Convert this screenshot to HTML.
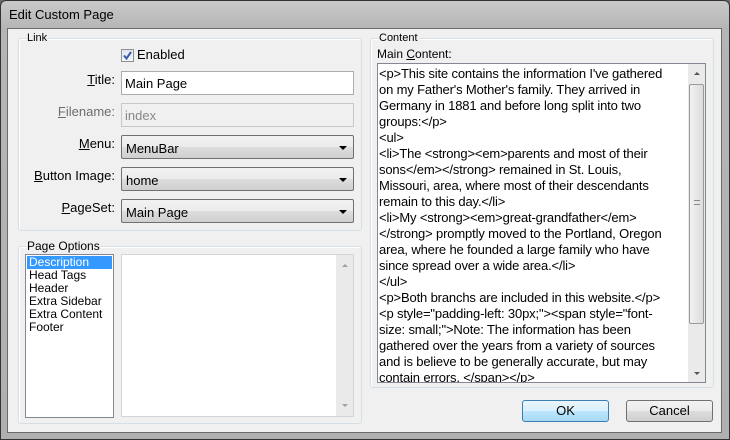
<!DOCTYPE html>
<html><head><style>
*{box-sizing:border-box;margin:0;padding:0}
body{width:730px;height:440px;background:#6b6b6b;font-family:"Liberation Sans",sans-serif;font-size:13px;color:#000;position:relative;overflow:hidden}
.win{position:absolute;left:0;top:0;width:730px;height:440px;border:1px solid #333;border-radius:6px 6px 0 0;background:linear-gradient(#c9c9c9,#b5b5b5 28px,#b0b0b0)}
.title{position:absolute;left:8px;top:6px;font-size:13px;color:#000;font-family:"Liberation Sans",sans-serif}
.client{position:absolute;left:7px;top:28px;width:715px;height:405px;background:#f0f0f0;border:1px solid #6c6c6c}
.abs{position:absolute}
.grp{position:absolute;border:1px solid #d5dfe5;border-radius:3px;box-shadow:inset 1px 1px 0 #fff}
.glab{position:absolute;background:#f0f0f0;font-size:11px;padding:0 1px;top:-7px;left:7px}
.lbl{position:absolute;right:0;text-align:right;font-size:13px}
.inp{position:absolute;border:1px solid #abadb3;background:#fff;padding:4px 3px;font-size:13px;height:24px}
.sel{position:absolute;border:1px solid #707070;border-radius:2px;background:linear-gradient(#f2f2f2 0,#ebebeb 50%,#dddddd 51%,#cfcfcf);padding:5px 4px;font-size:13px;height:24px}
.sel:after{content:"";position:absolute;right:6px;top:10px;border-left:4px solid transparent;border-right:4px solid transparent;border-top:4px solid #000}
.btn{position:absolute;border:1px solid #707070;border-radius:3px;background:linear-gradient(#f2f2f2,#ebebeb 50%,#dddddd 51%,#cfcfcf);text-align:center;font-size:13px;line-height:20px}
</style></head><body>
<div class="win"><div class="title">Edit Custom Page</div></div>
<div class="client">
 <div class="grp" style="left:10px;top:9px;width:344px;height:193px"><span class="glab" style="top:-7px">Link</span></div>
 <div class="abs" style="left:113px;top:20px;width:13px;height:13px;border:1px solid #8f8f8f;background:linear-gradient(#dfe6f2,#f4f7fb)"><svg width="11" height="11" style="position:absolute;left:0;top:0"><path d="M2 5.5 L4.5 8.5 L9 2" stroke="#3a5aa8" stroke-width="2" fill="none"/></svg></div>
 <div class="abs" style="left:129px;top:18px;font-size:13px">Enabled</div>

 <div class="lbl" style="right:606px;top:43px"><u>T</u>itle:</div>
 <div class="inp" style="left:113px;top:42px;width:233px">Main Page</div>
 <div class="lbl" style="right:606px;top:75px;color:#6d6d6d"><u>F</u>ilename:</div>
 <div class="inp" style="left:113px;top:74px;width:233px;background:#f0f0f0;color:#888;border-color:#c8c8c8">index</div>
 <div class="lbl" style="right:606px;top:107px"><u>M</u>enu:</div>
 <div class="sel" style="left:113px;top:106px;width:233px">MenuBar</div>
 <div class="lbl" style="right:606px;top:139px"><u>B</u>utton Image:</div>
 <div class="sel" style="left:113px;top:138px;width:233px">home</div>
 <div class="lbl" style="right:606px;top:171px"><u>P</u>ageSet:</div>
 <div class="sel" style="left:113px;top:170px;width:233px">Main Page</div>

 <div class="grp" style="left:10px;top:217px;width:344px;height:178px"><span class="glab" style="font-size:12px;top:-8px">Page Options</span></div>
 <div class="abs" style="left:17px;top:225px;width:89px;height:164px;border:1px solid #828790;background:#fff;font-size:12px;line-height:13px;padding:1px">
  <div style="background:#3399ff;color:#fff;padding-left:2px">Description</div>
  <div style="padding-left:2px">Head Tags</div>
  <div style="padding-left:2px">Header</div>
  <div style="padding-left:2px">Extra Sidebar</div>
  <div style="padding-left:2px">Extra Content</div>
  <div style="padding-left:2px">Footer</div>
 </div>
 <div class="abs" style="left:113px;top:225px;width:233px;height:163px;border:1px solid #d5d5d5;background:#fff">
  <div class="abs" style="right:0;top:0;width:17px;height:161px;background:#eaeaea"></div>
  <div class="abs" style="right:5px;top:9px;border-left:3px solid transparent;border-right:3px solid transparent;border-bottom:3px solid #a0a0a0"></div>
  <div class="abs" style="right:5px;bottom:9px;border-left:3px solid transparent;border-right:3px solid transparent;border-top:3px solid #a0a0a0"></div>
 </div>

 <div class="grp" style="left:362px;top:9px;width:344px;height:350px"><span class="glab">Content</span></div>
 <div class="abs" style="left:369px;top:18px;font-size:12px">Main <u>C</u>ontent:</div>
 <div class="abs" style="left:369px;top:34px;width:329px;height:320px;border:1px solid #828790;background:#fff;overflow:hidden">
  <div style="position:absolute;left:1px;top:2px;width:308px;font-size:13px;line-height:16px;letter-spacing:-0.15px;white-space:nowrap">&lt;p&gt;This site contains the information I've gathered<br>on my Father's Mother's family. They arrived in<br>Germany in 1881 and before long split into two<br>groups:&lt;/p&gt;<br>&lt;ul&gt;<br>&lt;li&gt;The &lt;strong&gt;&lt;em&gt;parents and most of their<br>sons&lt;/em&gt;&lt;/strong&gt; remained in St. Louis,<br>Missouri, area, where most of their descendants<br>remain to this day.&lt;/li&gt;<br>&lt;li&gt;My &lt;strong&gt;&lt;em&gt;great-grandfather&lt;/em&gt;<br>&lt;/strong&gt; promptly moved to the Portland, Oregon<br>area, where he founded a large family who have<br>since spread over a wide area.&lt;/li&gt;<br>&lt;/ul&gt;<br>&lt;p&gt;Both branchs are included in this website.&lt;/p&gt;<br>&lt;p style="padding-left: 30px;"&gt;&lt;span style="font-<br>size: small;"&gt;Note: The information has been<br>gathered over the years from a variety of sources<br>and is believe to be generally accurate, but may<br>contain errors. &lt;/span&gt;&lt;/p&gt;</div>
  <div class="abs" style="right:0;top:0;width:17px;height:318px;background:#eaeaea"></div>
  <div class="abs" style="right:1px;top:20px;width:15px;height:240px;border:1px solid #9a9a9a;border-radius:2px;background:linear-gradient(90deg,#f2f2f2,#dcdcdc)"></div>
  <div class="abs" style="right:5px;top:136px;width:6px;height:5px;border-top:1px solid #888;border-bottom:1px solid #888"></div>
  <div class="abs" style="right:5px;top:8px;border-left:3px solid transparent;border-right:3px solid transparent;border-bottom:3px solid #555"></div>
  <div class="abs" style="right:5px;bottom:7px;border-left:3px solid transparent;border-right:3px solid transparent;border-top:3px solid #555"></div>
 </div>

 <div class="btn" style="left:514px;top:371px;width:87px;height:22px;border-color:#3c7fb1;background:linear-gradient(#eaf6fd,#d9f0fc 50%,#bee6fd 51%,#a7d9f5)">OK</div>
 <div class="btn" style="left:618px;top:371px;width:87px;height:22px">Cancel</div>
</div>
</body></html>
